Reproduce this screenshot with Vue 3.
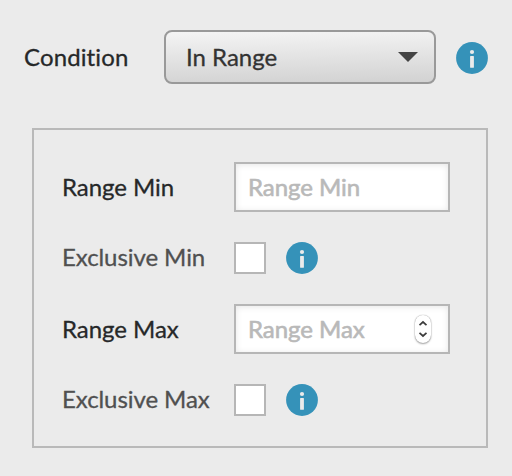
<script setup>
import { h, ref } from 'vue'

const condition = ref('In Range')
const rows = ref([
  { kind: 'input', label: 'Range Min', value: '', spinner: false },
  { kind: 'check', label: 'Exclusive Min', value: false },
  { kind: 'input', label: 'Range Max', value: '', spinner: true },
  { kind: 'check', label: 'Exclusive Max', value: false },
])

const InfoIcon = () =>
  h('svg', { viewBox: '0 0 32 32', width: 32, height: 32 }, [
    h('circle', { cx: 16, cy: 16, r: 15.9, fill: '#3592b9' }),
    h('circle', { cx: 16, cy: 10, r: 2.1, fill: '#ebebeb' }),
    h('rect', { x: 14.1, y: 14, width: 3.8, height: 11.8, rx: 0.6, fill: '#ebebeb' }),
  ])
</script>

<template>
  <main class="form">
    <div class="condition">
      <span class="label condition-label">Condition</span>
      <button class="select" type="button">
        <span>{{ condition }}</span>
        <svg class="caret" viewBox="0 0 20 10" width="20" height="10">
          <path d="M0 0H20L10 10Z" fill="#444" />
        </svg>
      </button>
      <InfoIcon class="info condition-info" />
    </div>

    <section class="panel">
      <label v-for="row in rows" :key="row.label" class="row">
        <span class="label" :class="{ muted: row.kind === 'check' }">{{ row.label }}</span>
        <span v-if="row.kind === 'input'" class="field">
          <input v-model="row.value" class="input" type="text" :placeholder="row.label" />
          <span v-if="row.spinner" class="spinner">
            <svg viewBox="0 0 16 28" width="16" height="28">
              <path
                d="M4.5 10.2L8 7L11.5 10.2M4.5 17.8L8 21L11.5 17.8"
                fill="none"
                stroke="#3c3c3c"
                stroke-width="1.7"
              />
            </svg>
          </span>
        </span>
        <template v-else>
          <input v-model="row.value" class="check" type="checkbox" />
          <InfoIcon class="info" />
        </template>
      </label>
    </section>
  </main>
</template>

<style>
body {
  background: #ebebeb;
}
</style>

<style scoped>
.form {
  box-sizing: border-box;
  width: 512px;
  height: 476px;
  padding: 30px 24px 28px;
  background: #ebebeb;
  color: #262829;
  font: 24px/30px Lato, sans-serif;
  font-variant-ligatures: none;
  letter-spacing: -0.04px;
}

.condition {
  display: flex;
  align-items: center;
  height: 54px;
}

.label {
  flex: none;
  width: 172px;
  -webkit-text-stroke: 0.3px currentColor;
}

.condition-label {
  width: 140px;
  letter-spacing: 0.12px;
}

.muted {
  padding-bottom: 2px;
  color: #505050;
  letter-spacing: -0.07px;
}

.select {
  box-sizing: border-box;
  display: flex;
  align-items: center;
  justify-content: space-between;
  width: 272px;
  height: 54px;
  padding: 0 16px 0 20px;
  border: 2px solid #999;
  border-radius: 8px;
  background: linear-gradient(179deg, #f4f4f4, #d2d2d2);
  color: #333;
  font: inherit;
  font-variant-ligatures: none;
  letter-spacing: 0;
  -webkit-text-stroke: 0.3px currentColor;
}

.info {
  flex: none;
  margin-left: 20px;
}

.condition-info {
  margin: 2px 0 0 20.4px;
}

.panel {
  box-sizing: border-box;
  display: flex;
  flex-direction: column;
  gap: 30px;
  width: 456px;
  height: 320px;
  margin: 44px 0 0 8px;
  padding: 32px 28px 30px;
  border: 2px solid #b9b9b9;
}

.row {
  display: flex;
  align-items: center;
}

.field {
  box-sizing: border-box;
  display: flex;
  align-items: center;
  width: 216px;
  height: 50px;
  padding: 0 17px 0 12px;
  border: 2px solid #b6b6b6;
  background: #fff;
  box-shadow: inset 0 1px 6px rgba(0, 0, 0, 0.1);
}

.input {
  flex: 1;
  min-width: 0;
  padding: 0;
  border: 0;
  outline: 0;
  background: transparent;
  color: #262829;
  font: inherit;
  letter-spacing: inherit;
}

.input::placeholder {
  color: #b9b9b9;
  opacity: 1;
  -webkit-text-stroke: 0.6px #b9b9b9;
}

.spinner {
  display: flex;
  width: 16px;
  height: 28px;
  border-radius: 8px;
  background: #fff;
  box-shadow: 0 0 1px rgba(0, 0, 0, 0.4), 0 1px 2px rgba(0, 0, 0, 0.35);
}

.check {
  appearance: none;
  box-sizing: border-box;
  flex: none;
  width: 32px;
  height: 32px;
  margin: 0;
  border: 2px solid #b6b6b6;
  background: #fff;
}
</style>
